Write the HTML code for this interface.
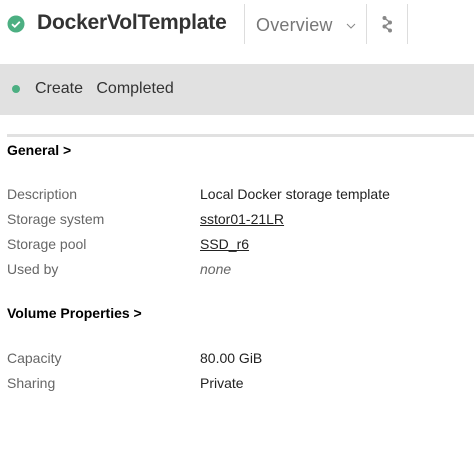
<!DOCTYPE html>
<html><head><style>
body{margin:0;width:474px;height:451px;background:#fff;font-family:"Liberation Sans",sans-serif;position:relative;overflow:hidden}
.a{position:absolute;white-space:nowrap}
.l{color:#666;font-size:14px}
.v{color:#222;font-size:14px}
.h{font-weight:bold;font-size:14px;color:#000}
.d{position:absolute;top:4px;width:1px;height:40px;background:#ddd}
</style></head><body>
<svg class="a" style="left:7px;top:15px" width="18" height="18"><circle cx="9" cy="9" r="8.5" fill="#4caf82"/><path d="M5 9.2l2.8 2.6 5-5" stroke="#fff" stroke-width="1.8" fill="none"/></svg>
<div class="a" style="left:37px;top:11px;font-size:21px;font-weight:bold;color:#333;letter-spacing:-0.2px">DockerVolTemplate</div>
<div class="d" style="left:244px"></div>
<div class="a" style="left:256px;top:15px;font-size:18px;color:#777;letter-spacing:0.2px">Overview</div>
<svg class="a" style="left:346px;top:23px" width="10" height="6"><path d="M1 1l4 4 4-4" stroke="#888" fill="none"/></svg>
<div class="d" style="left:366px"></div>
<svg class="a" style="left:380px;top:14px" width="14" height="22"><path d="M4.5 4L10 8.5L4.5 12.5L10 16.5" stroke="#888" stroke-width="1.4" fill="none"/><circle cx="4.5" cy="4" r="2" fill="#888"/><circle cx="10" cy="8.5" r="2" fill="#888"/><circle cx="4.5" cy="12.5" r="2" fill="#888"/><circle cx="10" cy="16.5" r="2" fill="#888"/></svg>
<div class="d" style="left:407px"></div>
<div class="a" style="left:0;top:64px;width:474px;height:51px;background:#e1e1e1"></div>
<div class="a" style="left:12px;top:85px;width:8px;height:8px;border-radius:50%;background:#4caf82"></div>
<div class="a" style="left:35px;top:80px;font-size:16px;color:#333">Create&nbsp;&nbsp;&nbsp;Completed</div>
<div class="a" style="left:7px;top:134px;width:467px;height:3px;background:#e1e1e1"></div>
<div class="a h" style="left:7px;top:142px">General &gt;</div>
<div class="a l" style="left:7px;top:186px">Description</div><div class="a v" style="left:200px;top:186px">Local Docker storage template</div>
<div class="a l" style="left:7px;top:211px">Storage system</div><div class="a v" style="left:200px;top:211px;text-decoration:underline">sstor01-21LR</div>
<div class="a l" style="left:7px;top:236px">Storage pool</div><div class="a v" style="left:200px;top:236px;text-decoration:underline">SSD_r6</div>
<div class="a l" style="left:7px;top:261px">Used by</div><div class="a l" style="left:200px;top:261px;font-style:italic">none</div>
<div class="a h" style="left:7px;top:305px">Volume Properties &gt;</div>
<div class="a l" style="left:7px;top:350px">Capacity</div><div class="a v" style="left:200px;top:350px">80.00 GiB</div>
<div class="a l" style="left:7px;top:375px">Sharing</div><div class="a v" style="left:200px;top:375px">Private</div>
</body></html>
